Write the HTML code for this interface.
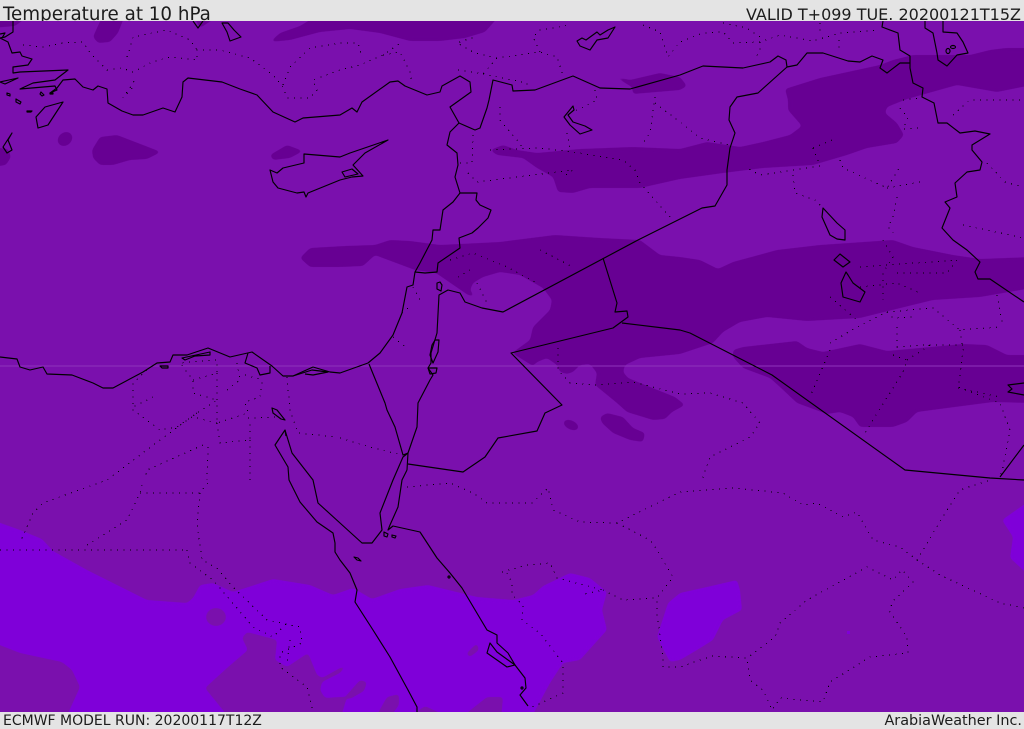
<!DOCTYPE html>
<html><head><meta charset="utf-8"><title>Temperature at 10 hPa</title>
<style>
html,body{margin:0;padding:0;background:#e4e4e4}
#w{position:relative;width:1024px;height:729px;overflow:hidden;background:#e4e4e4;font-family:"DejaVu Sans",sans-serif;color:#1c1c1c}
svg{position:absolute;left:0;top:21px}
.t{position:absolute;white-space:nowrap;line-height:1}
#h{position:absolute;left:0;top:0;width:1024px;height:21px;overflow:hidden;background:#e4e4e4}
</style></head><body><div id="w">
<div id="h">
<div class="t" style="left:3px;top:6px;font-size:18.3px">Temperature at 10 hPa</div>
<div class="t" style="right:3px;top:7px;font-size:16px">VALID T+099 TUE. 20200121T15Z</div>
</div>
<svg width="1024" height="691" viewBox="0 21 1024 691">
<defs><filter id="s" filterUnits="userSpaceOnUse" x="-20" y="0" width="1064" height="730" color-interpolation-filters="sRGB"><feGaussianBlur stdDeviation="1.8"/><feComponentTransfer><feFuncA type="linear" slope="7" intercept="-3"/></feComponentTransfer></filter></defs>
<rect x="0" y="21" width="1024" height="691" fill="#7a10ad"/>
<g fill="#670093" filter="url(#s)">
<polygon points="270,42 280,33 300,26 318,15 500,15 485,32 465,38 440,41 410,41 380,33 350,29 320,32 290,40"/>
<polygon points="103,15 125,15 118,33 110,42 98,43 93,37 97,28"/>
<polygon points="-8,15 30,15 15,26 -8,28"/>
<polygon points="193,15 220,15 200,28"/>
<polygon points="1032,48 1006,48 990,50 970,55 913,55 893,60 880,65 820,78 785,89 788,100 788,110 802,126 790,135 763,142 740,147 707,142 680,149 633,147 580,149 537,153 517,150 503,145 490,150 497,155 523,158 537,168 553,177 558,192 573,193 590,188 640,188 680,179 723,173 763,168 813,165 847,155 867,148 897,143 904,135 897,123 885,113 887,107 907,99 957,85 997,92 1032,85"/>
<polygon points="607,75 630,80 660,73 680,77 687,86 680,90 633,94 632,87 620,80"/>
<polygon points="300,258 310,248 345,246 375,245 390,240 410,241 440,245 500,242 555,235 600,238 640,240 660,255 680,257 700,260 718,269 733,262 777,250 820,245 893,240 913,247 953,255 980,259 1032,257 1032,288 980,297 933,300 880,313 860,318 807,321 767,317 740,322 723,332 713,343 680,354 640,358 625,365 623,372 628,378 650,387 675,397 685,405 672,412 665,419 653,420 627,412 617,403 595,385 597,373 590,364 580,365 573,372 567,374 560,372 557,365 547,358 537,362 533,366 512,353 530,340 533,327 550,310 552,300 543,288 520,275 500,272 483,277 473,283 470,290 475,297 468,295 436,273 415,270 375,255 363,266 340,267 310,267"/>
<polygon points="733,350 743,347 797,341 807,348 823,352 860,344 887,351 963,344 987,345 1007,355 1032,355 1032,403 993,402 947,408 917,412 907,422 893,427 860,427 853,417 840,412 827,414 797,403 780,387 770,378 743,368 733,357"/>
<polygon points="600,417 607,413 623,417 633,428 645,433 643,442 630,440 613,433 602,423"/>
<ellipse cx="571" cy="425" rx="8" ry="4.5" transform="rotate(25 571 425)"/>
<polygon points="92,150 100,137 117,135 143,145 161,152 147,159 130,160 113,165 100,165 93,158"/>
<ellipse cx="65" cy="139" rx="8" ry="6.5" transform="rotate(-40 65 139)"/>
<polygon points="270,155 287,145 303,151 290,158 273,160"/>
<polygon points="-8,147 8,149 11,157 6,165 -8,167"/>
<polygon points="95,80 110,75 104,79"/>
</g>
<g fill="#7f00d9" filter="url(#s)">
<polygon points="-8,520 20,530 42,539 53,551 87,570 127,590 147,600 187,603 193,598 200,585 213,583 233,592 273,579 310,585 333,595 353,588 372,599 400,589 428,585 477,597 513,600 533,595 543,586 570,573 590,578 607,592 602,610 607,630 580,660 563,663 550,683 530,720 -8,720"/>
<polygon points="680,593 707,587 737,580 740,590 742,610 723,620 713,640 697,650 680,660 670,662 657,637 668,603"/>
<polygon points="1032,499 1002,520 1013,537 1010,558 1032,578"/>
</g>
<rect x="847" y="631" width="3" height="3" fill="#7f00d9"/>
<g fill="#7a10ad" filter="url(#s)">
<polygon points="-8,642 20,653 62,662 72,670 80,687 65,720 -8,720"/>
<polygon points="205,688 227,668 248,650 242,638 247,632 277,640 275,660 287,667 308,653 317,675 322,678 340,668 347,665 340,673 322,682 320,690 325,698 340,697 347,697 340,720 231,720"/>
<polygon points="345,697 360,680 367,682 364,691 350,699"/>
<polygon points="374,720 387,697 399,694 399,705 388,720"/>
<polygon points="458,720 487,697 503,697 501,720"/>
<polygon points="405,720 425,706 455,720"/>
<polygon points="466,654 477,643 479,650 470,657"/>
<ellipse cx="216" cy="617" rx="10" ry="9"/>
</g>
<line x1="0" y1="366" x2="1024" y2="366" stroke="#8f35bb" stroke-width="1"/>
<g fill="none" stroke="#000" stroke-width="1" stroke-dasharray="1 5.5" shape-rendering="crispEdges">
<polyline points="23,45 43,47 63,43 83,42 90,53 107,70 122,68 133,72 152,62 170,57 197,60 197,50 220,50 250,58 273,75 283,87 287,98 310,98 317,90 313,80 340,70 360,65 383,55 402,42"/>
<polyline points="127,57 130,48 133,37 167,30 190,40 197,50"/>
<polyline points="132,88 123,98 137,77"/>
<polyline points="283,85 290,67 310,48 340,43 358,43 362,57"/>
<polyline points="383,55 400,52 410,72 412,83"/>
<polyline points="458,70 483,74 497,58 540,52 557,57 563,76"/>
<polyline points="497,58 475,53 457,43 475,37"/>
<polyline points="540,52 533,37 540,30 570,25"/>
<polyline points="483,74 527,83 528,90"/>
<polyline points="643,25 660,32 668,57 680,42 703,33 723,32 733,43 760,42 780,35 813,41 840,33 877,30"/>
<polyline points="723,23 747,28 760,37 760,50 755,59"/>
<polyline points="820,23 820,33"/><polyline points="839,40 839,53"/>
<polyline points="500,107 500,120 517,140 522,147"/>
<polyline points="595,90 597,100 573,112"/>
<polyline points="567,133 570,148"/>
<polyline points="655,97 650,133 643,143"/>
<polyline points="655,103 680,122 700,138 730,145"/>
<polyline points="473,135 472,163 458,163"/>
<polyline points="490,150 540,148 573,152 623,160 635,170 640,183 670,217"/>
<polyline points="468,173 477,182 533,175 573,170 563,177"/>
<polyline points="813,148 837,138"/><polyline points="813,148 820,166 793,170 760,175 747,168"/>
<polyline points="793,175 795,193 815,200 823,208"/>
<polyline points="840,160 843,168 887,188 900,167"/><polyline points="887,188 920,182"/>
<polyline points="897,197 893,217 888,227 893,233"/>
<polyline points="903,100 920,98"/><polyline points="900,108 908,118 903,129 920,128"/>
<polyline points="953,115 970,100 1023,100"/>
<polyline points="987,163 1005,182 1023,187"/>
<polyline points="963,225 1024,238"/>
<polyline points="450,260 473,253 507,267 537,283"/>
<polyline points="540,250 573,267"/><polyline points="458,277 470,270"/>
<polyline points="413,287 420,300"/><polyline points="402,313 408,308"/>
<polyline points="393,337 407,348"/><polyline points="477,283 487,303"/>
<polyline points="558,348 558,370 570,383 593,385 633,382 680,394 710,393 743,403 760,423 750,437 710,457 702,480"/>
<polyline points="340,438 373,448 402,455"/>
<polyline points="830,343 857,327 887,312 933,308 960,330 1000,327"/>
<polyline points="887,312 893,318 913,317"/><polyline points="897,327 897,350"/>
<polyline points="960,330 963,350 960,375 958,387 1000,403 1010,430 1003,467 1000,477"/>
<polyline points="997,295 1003,327"/>
<polyline points="897,347 923,345 963,345"/>
<polyline points="893,355 907,360 903,372 873,420 865,433"/>
<polyline points="830,350 810,397"/><polyline points="907,360 930,345"/>
<polyline points="883,240 893,257 883,273 883,300"/>
<polyline points="830,297 857,320"/>
<polyline points="860,267 957,260"/><polyline points="897,273 947,273 957,260"/>
<polyline points="860,287 897,283 920,293"/>
<polyline points="958,388 1000,397"/>
<polyline points="147,370 133,383 133,410 160,430 177,427 197,413"/>
<polyline points="153,397 133,407"/>
<polyline points="193,380 217,373 217,360 180,363 193,380 193,393 217,400 197,413"/>
<polyline points="217,373 217,423 248,413 245,402 260,397 263,378"/>
<polyline points="217,423 193,417"/>
<polyline points="227,390 240,380 237,363"/><polyline points="245,375 263,380"/>
<polyline points="287,377 290,410 298,433 337,437"/>
<polyline points="248,418 280,417"/>
<polyline points="217,423 220,443 250,440 250,420"/><polyline points="250,440 250,480"/>
<polyline points="197,413 160,440 107,480 43,503 33,513 20,543"/>
<polyline points="203,445 147,470 145,480"/>
<polyline points="208,447 207,480"/>
<polyline points="0,550 187,550"/>
<polyline points="87,545 127,520 140,493 143,480"/>
<polyline points="140,493 200,493 210,480"/>
<polyline points="200,493 197,523 202,560 217,568 233,587 267,620 300,627 302,643 280,653 280,667 307,687 313,712"/>
<polyline points="187,550 190,563 213,580 253,627 273,637 287,623"/>
<polyline points="290,640 287,663"/>
<polyline points="407,487 450,483 473,493 487,503 532,503 548,488 553,510 580,522 617,523 680,492 733,488 783,493 803,505 817,503 843,517 857,512 873,540 900,547 917,560 940,575 1000,603 1024,608"/>
<polyline points="917,560 947,510 960,490 990,480"/>
<polyline points="617,523 650,540 657,550 673,577 657,598 657,615 663,657 663,667 680,667 712,656 747,658 775,637 780,623 807,600 867,567 893,580 902,570 913,582 892,602 890,612 907,637 908,653 870,657 830,682 823,702 780,698 772,710 763,690 750,680 747,658"/>
<polyline points="502,572 527,565 550,563 557,578 603,590 580,595"/>
<polyline points="603,590 623,600 657,598"/>
<polyline points="507,573 512,583 512,595 523,605 522,620 540,633 563,663 563,693 532,707"/>
</g>
<g fill="none" stroke="#000" stroke-width="1.15" stroke-linejoin="round">
<polyline points="13,21 13,32 5,37 0,38 8,42 12,53 20,52 22,56 32,59 28,65 13,67 13,73 20,72 68,70 55,80 33,83 20,89 55,86 57,90 50,93 57,88 63,80 75,79 83,87 93,90 98,86 107,89 108,103 122,111 133,115 143,115 163,108 175,112 182,97 183,82 188,78 222,82 240,89 257,95 273,112 295,122 303,118 340,115 352,108 357,112 362,102 390,82 398,81 405,86 427,95 440,92 442,86 460,76 470,82 471,92 450,107 459,123 450,132 447,145 457,153 458,165 455,177 460,193 453,202 443,210 440,230 433,230 432,240 420,263 415,272 413,285 407,287 402,313 393,335 380,353 368,363 340,373 330,372 313,367 293,376 283,376 272,366 252,352 230,357 208,348 187,355 173,355 170,362 157,363 143,372 113,388 103,388 93,383 72,375 47,374 43,367 30,370 20,367 17,359 0,357"/>
<polyline points="0,34 5,33 2,38"/>
<polygon points="182,358 210,352 210,355 195,356 185,360"/>
<polyline points="248,353 245,363 257,368 260,375 270,373 270,366"/>
<polyline points="293,376 312,370 328,372 313,375 305,374"/>
<polygon points="160,366 168,366 168,368 162,368"/>
<polyline points="459,123 475,130 480,128 487,108 489,100 493,80 512,85 513,91 535,90 573,76 600,88 630,89 680,75 703,66 743,68 770,62 778,56 786,60 787,67 797,65 807,53 823,53 848,61 860,62 872,56 883,60 880,68 887,73 900,63 910,63"/>
<polyline points="883,21 882,27 898,33 900,50 910,56 910,68 913,83 923,88 922,97 934,103 938,123 947,123 960,133 975,131 990,134 972,145 972,150 982,162 980,170 967,172 955,183 957,197 945,202 950,208 942,228 953,240 967,250 980,262 975,272 978,279 990,279 1024,302"/>
<polyline points="460,193 477,193 476,200 480,205 491,210 488,218 478,228 472,233 459,238 460,248 438,263 437,272 425,273 415,272"/>
<polyline points="787,67 758,93 737,97 730,107 729,120 735,133 730,148 727,170 727,185 715,206 702,208 680,219 638,240 503,312 482,308 465,302 460,293 448,290 439,295 437,333 431,353 431,363 428,368 433,375 430,380 418,403 417,427 408,453 407,470"/>
<polygon points="435,340 439,340 438,352 433,363 430,355 432,345"/>
<polygon points="428,368 437,368 436,373 430,374"/>
<polygon points="437,283 440,282 442,285 441,291 437,289"/>
<polyline points="603,258 617,303 615,312 627,311 628,317 613,328 511,353 562,405 545,413 537,431 498,438 485,457 463,472 408,464"/>
<polyline points="622,323 680,330 690,333 772,375 905,470 990,478 1024,480"/>
<polyline points="1000,477 1024,445"/>
<polyline points="369,364 385,403 387,410 395,427 403,455 408,453 403,457 393,480 380,513 382,530 372,543 362,543 340,523 318,503 313,480 292,453 285,430 275,445 288,467 289,480 300,502 317,522 333,533 335,543 335,552 340,560 350,573 357,590 355,602 373,630 390,657 408,690 417,707 417,712"/>
<polyline points="407,470 402,480 398,507 390,525 388,530 393,526 420,532 437,558 450,573 462,588 487,630 497,635 497,643 508,653 515,665 525,678 526,688 520,695 528,706"/>
<polygon points="490,643 487,653 507,667 515,665 508,660 497,652"/>
<polygon points="384,532 388,534 387,537 384,536"/><polygon points="392,535 396,536 395,538 392,537"/>
<polygon points="354,557 358,558 361,561 357,560"/>
<polygon points="272,408 277,410 285,420 281,419 273,413"/>
<polyline points="285,430 286,436"/>
<polygon points="304,154 304,163 283,168 277,173 270,170 273,182 278,188 297,193 304,192 306,197 308,193 340,180 352,177 363,176 353,165 365,153 388,140 350,153 340,157"/>
<polygon points="342,172 352,169 358,174 345,177"/>
<polygon points="63,102 45,107 36,117 38,128 48,125"/>
<polygon points="12,133 3,147 7,153 12,150 8,140"/>
<polygon points="0,82 18,78 5,84"/>
<polygon points="7,93 10,94 10,96 7,95"/>
<polygon points="16,99 21,102 20,104 16,102"/>
<polygon points="27,111 32,111 31,112 27,112"/>
<polygon points="41,92 44,95 42,96 40,94"/>
<polygon points="50,93 53,93 53,94 50,94"/>
<polygon points="577,41 582,38 586,40 597,32 600,35 608,30 615,27 608,38 597,40 590,50 580,46"/>
<polyline points="193,21 198,28 203,21"/>
<polygon points="222,23 228,23 234,30 241,37 230,41 227,32"/>
<polygon points="573,106 564,117 570,125 580,134 592,130 585,126 573,122 568,115 574,110"/>
<polygon points="823,208 822,217 830,235 837,239 845,240 845,230 837,223"/>
<polygon points="834,260 840,254 845,258 850,262 843,267"/>
<polygon points="846,272 841,283 843,297 860,302 865,292 853,283 848,275"/>
<polyline points="1024,383 1008,385 1012,389 1008,392 1024,395"/>
<polyline points="925,21 925,28 933,33 937,53 938,60 947,66 957,55 968,53 963,42 957,33 943,32 943,21"/>
<ellipse cx="948" cy="51" rx="2" ry="2.5"/><ellipse cx="953" cy="47" rx="2.5" ry="1.5"/>
<ellipse cx="522" cy="688" rx="1" ry="1"/>
<ellipse cx="449" cy="577" rx="1" ry="1"/>
</g>
</svg>
<div class="t" style="left:3px;top:714px;font-size:14px">ECMWF MODEL RUN: 20200117T12Z</div>
<div class="t" style="right:2px;top:714px;font-size:14.4px">ArabiaWeather Inc.</div>
</div></body></html>
